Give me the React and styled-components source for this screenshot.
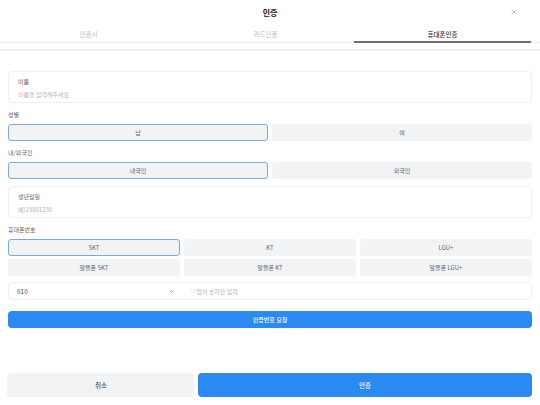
import React from "react";
import styled, { createGlobalStyle } from "styled-components";
import { ChevronDown, X } from "lucide-react";

const Global = createGlobalStyle`
  html, body { margin: 0; padding: 0; background: #fff; }
  body { font-family: "Noto Sans CJK KR", "Noto Sans", sans-serif; color: #333; }
  * { box-sizing: border-box; }
`;

const Page = styled.div`
  width: 540px;
  height: 405px;
  display: flex;
  flex-direction: column;
  background: #fff;
  position: relative;
`;

const Header = styled.div`
  height: 25px;
  display: flex;
  align-items: center;
  justify-content: center;
  position: relative;
`;

const Title = styled.div`
  font-size: 8px;
  font-weight: 700;
  color: #222;
`;

const Close = styled.button`
  position: absolute;
  right: 22px;
  top: 8px;
  border: 0;
  background: none;
  padding: 0;
  display: flex;
  color: #777;
`;

const Tabs = styled.div`
  display: grid;
  grid-template-columns: repeat(3, 177px);
  height: 18px;
  border-bottom: 1px solid #ececec;
`;

const Tab = styled.div`
  display: flex;
  align-items: center;
  justify-content: center;
  padding-top: 2px;
  font-size: 6.5px;
  color: ${(p) => (p.$active ? "#333" : "#bdbdbd")};
  font-weight: ${(p) => (p.$active ? 500 : 400)};
  border-bottom: 2px solid ${(p) => (p.$active ? "#6e6e6e" : "transparent")};
  margin-bottom: -1px;
`;

const Separator = styled.div`
  margin-top: 6px;
  height: 2px;
  background: #f1f1f1;
`;

const Content = styled.div`
  padding: 20px 8px 0;
  display: flex;
  flex-direction: column;
`;

const FieldBox = styled.div`
  height: 32px;
  border: 1px solid #efefef;
  border-radius: 4px;
  padding: 6px 9px 0;
  display: flex;
  flex-direction: column;
  gap: 5px;
  margin-top: ${(p) => p.$mt || 0}px;
`;

const FieldLabel = styled.div`
  font-size: 6px;
  color: #666;
  line-height: 8px;
`;

const Placeholder = styled.div`
  font-size: 6px;
  color: #b5b5b5;
  line-height: 8px;
`;

const Label = styled.div`
  font-size: 6px;
  line-height: 9px;
  color: #666;
  margin: 7px 0 5px;
`;

const Row = styled.div`
  display: grid;
  grid-template-columns: repeat(${(p) => p.$cols}, 1fr);
  gap: 4px;
  margin-top: ${(p) => p.$mt || 0}px;
`;

const Choice = styled.button`
  height: 17px;
  border-radius: 3px;
  border: 1px solid ${(p) => (p.$selected ? "#7aa9de" : "#f2f3f5")};
  background: #f2f3f5;
  font-family: inherit;
  font-size: 6px;
  color: #666;
  padding: 0;
  display: flex;
  align-items: center;
  justify-content: center;
`;

const PhoneBox = styled.div`
  margin-top: 6px;
  height: 18px;
  border: 1px solid #efefef;
  border-radius: 4px;
  display: grid;
  grid-template-columns: 174px 1fr;
`;

const Select = styled.div`
  display: flex;
  align-items: center;
  justify-content: space-between;
  padding: 0 8px 0 8px;
  font-size: 6.5px;
  color: #444;
`;

const PhoneInput = styled.div`
  display: flex;
  align-items: center;
  padding-left: 8px;
  font-size: 6px;
  color: #b5b5b5;
`;

const PrimaryButton = styled.button`
  height: ${(p) => p.$h || 17}px;
  margin-top: ${(p) => p.$mt || 0}px;
  border: 0;
  border-radius: 4px;
  background: #2b8af2;
  color: #fff;
  font-family: inherit;
  font-size: ${(p) => p.$fs || 6}px;
  font-weight: 500;
  display: flex;
  align-items: center;
  justify-content: center;
  padding: 0;
`;

const Footer = styled.div`
  margin-top: auto;
  padding: 0 8px 8px 7px;
  display: grid;
  grid-template-columns: 188px 1fr;
  gap: 3px;
`;

const SecondaryButton = styled.button`
  height: 24px;
  border: 0;
  border-radius: 4px;
  background: #f2f3f5;
  color: #555;
  font-family: inherit;
  font-size: 6.5px;
  font-weight: 500;
  padding: 0;
`;

export default function App() {
  return (
    <Page>
      <Global />
      <Header>
        <Title>인증</Title>
        <Close aria-label="닫기">
          <X size={8} strokeWidth={1.5} />
        </Close>
      </Header>
      <Tabs>
        <Tab>인증서</Tab>
        <Tab>카드인증</Tab>
        <Tab $active>휴대폰인증</Tab>
      </Tabs>
      <Separator />
      <Content>
        <FieldBox>
          <FieldLabel>이름</FieldLabel>
          <Placeholder>이름을 입력해주세요</Placeholder>
        </FieldBox>
        <Label>성별</Label>
        <Row $cols={2}>
          <Choice $selected>남</Choice>
          <Choice>여</Choice>
        </Row>
        <Label>내/외국인</Label>
        <Row $cols={2}>
          <Choice $selected>내국인</Choice>
          <Choice>외국인</Choice>
        </Row>
        <FieldBox $mt={7}>
          <FieldLabel>생년월일</FieldLabel>
          <Placeholder>예)19801230</Placeholder>
        </FieldBox>
        <Label>휴대폰번호</Label>
        <Row $cols={3}>
          <Choice $selected>SKT</Choice>
          <Choice>KT</Choice>
          <Choice>LGU+</Choice>
        </Row>
        <Row $cols={3} $mt={3}>
          <Choice>알뜰폰 SKT</Choice>
          <Choice>알뜰폰 KT</Choice>
          <Choice>알뜰폰 LGU+</Choice>
        </Row>
        <PhoneBox>
          <Select>
            <span>010</span>
            <ChevronDown size={7} strokeWidth={2} color="#555" />
          </Select>
          <PhoneInput>'-'없이 숫자만 입력</PhoneInput>
        </PhoneBox>
        <PrimaryButton $mt={11}>인증번호 요청</PrimaryButton>
      </Content>
      <Footer>
        <SecondaryButton>취소</SecondaryButton>
        <PrimaryButton $h={24} $fs={6.5}>인증</PrimaryButton>
      </Footer>
    </Page>
  );
}
